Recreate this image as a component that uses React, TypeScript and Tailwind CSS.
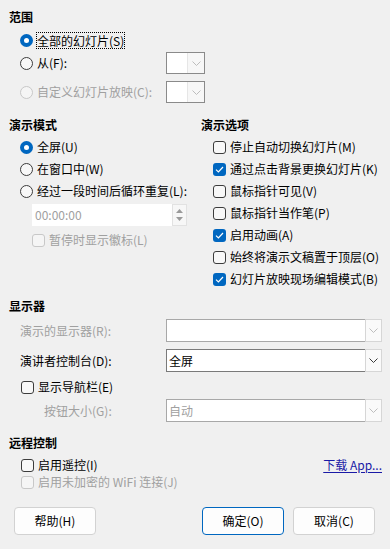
import React from 'react'

const DIS = 'text-[#a0a0a0]'

function Chevron({ light }: { light?: boolean }) {
  return (
    <svg width="9" height="5" viewBox="0 0 9 5">
      <path d="M0.5 0.5 L4.5 4.5 L8.5 0.5" fill="none" stroke={light ? '#bdbdbd' : '#3a3a3a'} strokeWidth="1" />
    </svg>
  )
}

function Radio({ checked, disabled }: { checked?: boolean; disabled?: boolean }) {
  if (checked) {
    return (
      <span className="w-[13px] h-[13px] rounded-full bg-[#0067c0] flex items-center justify-center shrink-0">
        <span className="w-[5px] h-[5px] rounded-full bg-white" />
      </span>
    )
  }
  return (
    <span
      className={`w-[13px] h-[13px] rounded-full border shrink-0 ${
        disabled ? 'border-[#c8c8c8] bg-[#f5f5f5]' : 'border-[#3c3c3c] bg-[#f8f8f8]'
      }`}
    />
  )
}

function Check({ checked, disabled }: { checked?: boolean; disabled?: boolean }) {
  if (checked) {
    return (
      <span className="w-[13px] h-[13px] rounded-[3px] bg-[#0067c0] flex items-center justify-center shrink-0">
        <svg width="9" height="7" viewBox="0 0 9 7">
          <path d="M1 3.6 L3.4 6 L8 1" fill="none" stroke="#fff" strokeWidth="1.2" />
        </svg>
      </span>
    )
  }
  return (
    <span
      className={`w-[13px] h-[13px] rounded-[3px] border shrink-0 ${
        disabled ? 'border-[#c8c8c8] bg-[#f5f5f5]' : 'border-[#3c3c3c] bg-[#f8f8f8]'
      }`}
    />
  )
}

function MiniCombo() {
  return (
    <div className="w-[39px] h-[22px] border border-[#8a8a8a] bg-white flex">
      <div className="flex-1" />
      <div className="w-[17px] bg-[#f7f7f7] border-l border-[#e6e6e6] flex items-center justify-center">
        <Chevron light />
      </div>
    </div>
  )
}

function Select({ value, disabled }: { value?: string; disabled?: boolean }) {
  return (
    <div className={`w-[216px] h-[23px] border bg-white flex ${disabled ? 'border-[#a8a8a8]' : 'border-[#7a7a7a]'}`}>
      <div className={`flex-1 flex items-center pl-[2px] ${disabled ? DIS : 'text-black'}`}>{value}</div>
      <div className="w-[17px] my-[-1px] mr-[-1px] bg-[#fafafa] border border-[#d6d6d6] flex items-center justify-center">
        <Chevron light={disabled} />
      </div>
    </div>
  )
}

function Heading({ children, className = '' }: { children: React.ReactNode; className?: string }) {
  return <div className={`h-[20px] flex items-center font-bold ${className}`}>{children}</div>
}

function Button({ children, primary, className = '' }: { children: React.ReactNode; primary?: boolean; className?: string }) {
  return (
    <div
      className={`w-[82px] h-[28px] rounded-[4px] border bg-[#fdfdfd] flex items-center justify-center ${
        primary ? 'border-[#0067c0]' : 'border-[#d2d2d2]'
      } ${className}`}
    >
      {children}
    </div>
  )
}

const options = [
  { label: '停止自动切换幻灯片(M)', on: false },
  { label: '通过点击背景更换幻灯片(K)', on: true },
  { label: '鼠标指针可见(V)', on: false },
  { label: '鼠标指针当作笔(P)', on: false },
  { label: '启用动画(A)', on: true },
  { label: '始终将演示文稿置于顶层(O)', on: false },
  { label: '幻灯片放映现场编辑模式(B)', on: true },
]

export default function App() {
  return (
    <div className="w-[390px] h-[549px] bg-[#f0f0f0] text-black text-[12px] leading-[16px] font-['Noto_Sans_CJK_SC',sans-serif] overflow-hidden pt-[7px]">
      {/* 范围 */}
      <Heading className="pl-[9px]">范围</Heading>
      <div className="mt-[2px] h-[22px] pl-[20px] flex items-center">
        <Radio checked />
        <span className="ml-[3px] border border-dotted border-black px-[0px] leading-[15px]">全部的幻灯片(S)</span>
      </div>
      <div className="mt-[1px] h-[22px] w-[205px] pl-[20px] flex items-center">
        <Radio />
        <span className="ml-[4px]">从(F):</span>
        <div className="ml-auto">
          <MiniCombo />
        </div>
      </div>
      <div className="mt-[7px] h-[22px] w-[205px] pl-[20px] flex items-center">
        <Radio disabled />
        <span className={`ml-[4px] ${DIS}`}>自定义幻灯片放映(C):</span>
        <div className="ml-auto">
          <MiniCombo />
        </div>
      </div>

      {/* 演示模式 / 演示选项 */}
      <div className="mt-[12px] flex">
        <div className="w-[201px]">
          <Heading className="pl-[9px]">演示模式</Heading>
          <div className="mt-[1px] h-[22px] pl-[20px] flex items-center">
            <Radio checked />
            <span className="ml-[4px]">全屏(U)</span>
          </div>
          <div className="h-[22px] pl-[20px] flex items-center">
            <Radio />
            <span className="ml-[4px]">在窗口中(W)</span>
          </div>
          <div className="h-[22px] pl-[20px] flex items-center">
            <Radio />
            <span className="ml-[4px]">经过一段时间后循环重复(L):</span>
          </div>
          <div className="mt-[2px] h-[22px] pl-[32px] flex">
            <div className={`w-[140px] bg-white flex items-center pl-[3px] ${DIS}`}>00:00:00</div>
            <div className="w-[15px] border border-[#e2e2e2] bg-[#f7f7f7] flex flex-col items-center justify-center gap-[4px]">
              <svg width="7" height="4" viewBox="0 0 7 4">
                <path d="M0 4 L3.5 0 L7 4 Z" fill="#9a9a9a" />
              </svg>
              <svg width="7" height="4" viewBox="0 0 7 4">
                <path d="M0 0 L3.5 4 L7 0 Z" fill="#9a9a9a" />
              </svg>
            </div>
          </div>
          <div className="mt-[3px] h-[22px] pl-[32px] flex items-center">
            <Check disabled />
            <span className={`ml-[4px] ${DIS}`}>暂停时显示徽标(L)</span>
          </div>
        </div>
        <div className="flex-1">
          <Heading>演示选项</Heading>
          <div className="mt-[1px]">
            {options.map((o) => (
              <div key={o.label} className="h-[22px] pl-[12px] flex items-center">
                <Check checked={o.on} />
                <span className="ml-[4px]">{o.label}</span>
              </div>
            ))}
          </div>
        </div>
      </div>

      {/* 显示器 */}
      <Heading className="mt-[6px] pl-[9px]">显示器</Heading>
      <div className="mt-[3px] pl-[20px] flex items-center">
        <span className={`w-[146px] ${DIS}`}>演示的显示器(R):</span>
        <Select disabled />
      </div>
      <div className="mt-[7px] pl-[20px] flex items-center">
        <span className="w-[146px]">演讲者控制台(D):</span>
        <Select value="全屏" />
      </div>
      <div className="mt-[4px] h-[22px] pl-[21px] flex items-center">
        <Check />
        <span className="ml-[4px]">显示导航栏(E)</span>
      </div>
      <div className="mt-[1px] pl-[44px] flex items-center">
        <span className={`w-[122px] ${DIS}`}>按钮大小(G):</span>
        <Select value="自动" disabled />
      </div>

      {/* 远程控制 */}
      <Heading className="mt-[11px] pl-[9px]">远程控制</Heading>
      <div className="mt-[2px] h-[20px] pl-[21px] pr-[8px] flex items-center">
        <Check />
        <span className="ml-[4px]">启用遥控(I)</span>
        <a className="ml-auto text-[#1a1aa6] underline underline-offset-2 cursor-pointer">下载 App...</a>
      </div>
      <div className="h-[14px] pl-[21px] flex items-center">
        <Check disabled />
        <span className={`ml-[4px] ${DIS}`}>启用未加密的 WiFi 连接(J)</span>
      </div>

      <div className="mt-[18px] pl-[14px] pr-[15px] flex items-center">
        <Button>帮助(H)</Button>
        <Button primary className="ml-auto">
          确定(O)
        </Button>
        <Button className="ml-[9px]">取消(C)</Button>
      </div>
    </div>
  )
}
